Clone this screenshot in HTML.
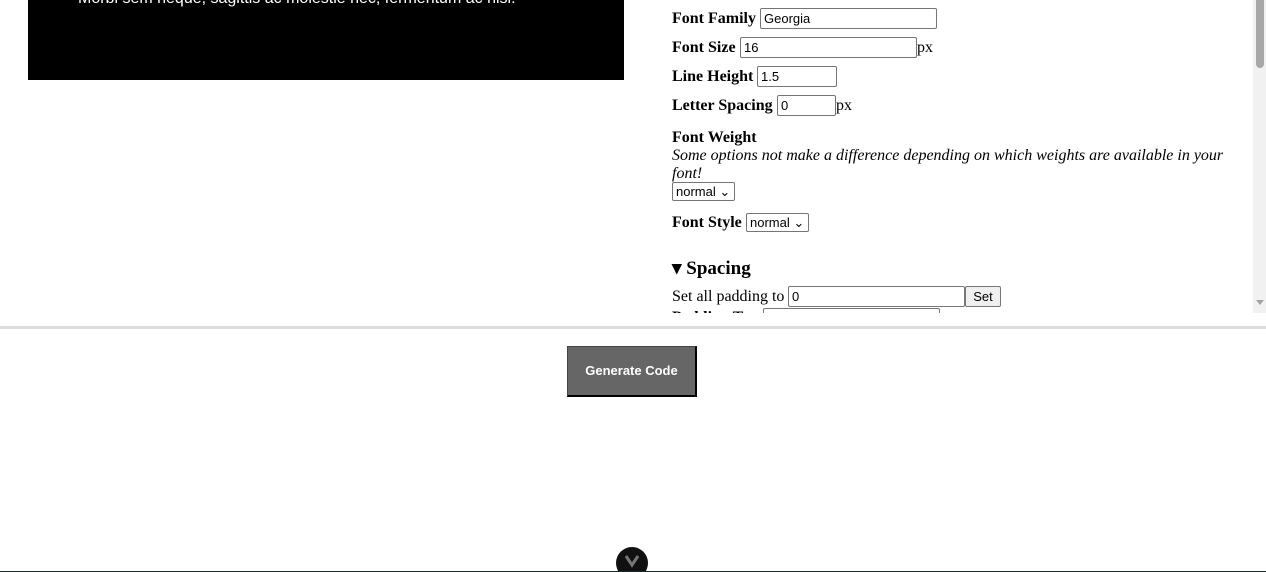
<!DOCTYPE html>
<html><head><style>
html,body{margin:0;width:1266px;height:572px;overflow:hidden}
body{background:#fff;position:relative;font-family:"Liberation Serif",serif;font-size:16px}
.a{position:absolute;white-space:nowrap}
b{font-weight:bold}
.in{position:absolute;box-sizing:border-box;border:1px solid #767676;border-radius:2px;height:21px;font:13px "Liberation Sans",sans-serif;padding:2px 3px;background:#fff;color:#000}
.sel{position:absolute;box-sizing:border-box;border:1px solid #767676;border-radius:2px;height:19px;font:13px "Liberation Sans",sans-serif;padding:1px 3px;background:#fff}
</style></head><body>
<div class="a" style="left:28px;top:0;width:596px;height:80px;background:#000;overflow:hidden">
<div class="a" style="left:50px;top:-10px;color:#fff;font:16px 'Liberation Sans',sans-serif">Morbi sem neque, sagittis ac molestie nec, fermentum ac nisi.</div></div>

<div class="a" style="left:672px;top:10px"><b>Font Family</b></div>
<div class="in" style="left:760px;top:8px;width:177px">Georgia</div>
<div class="a" style="left:672px;top:39px"><b>Font Size</b></div>
<div class="in" style="left:740px;top:37px;width:177px">16</div>
<div class="a" style="left:917px;top:39px">px</div>
<div class="a" style="left:672px;top:68px"><b>Line Height</b></div>
<div class="in" style="left:757px;top:66px;width:80px">1.5</div>
<div class="a" style="left:672px;top:97px"><b>Letter Spacing</b></div>
<div class="in" style="left:777px;top:95px;width:59px">0</div>
<div class="a" style="left:836px;top:97px">px</div>
<div class="a" style="left:672px;top:129px"><b>Font Weight</b></div>
<div class="a" style="left:672px;top:147px;font-style:italic">Some options not make a difference depending on which weights are available in your</div>
<div class="a" style="left:672px;top:165px;font-style:italic">font!</div>
<div class="sel" style="left:672px;top:182px;width:63px">normal ⌄</div>
<div class="a" style="left:672px;top:214px"><b>Font Style</b></div>
<div class="sel" style="left:746px;top:213px;width:63px">normal ⌄</div>
<div class="a" style="left:672px;top:257px;font-size:19px"><b>▾ Spacing</b></div>
<div class="a" style="left:672px;top:288px">Set all padding to</div>
<div class="in" style="left:788px;top:286px;width:177px">0</div>
<div class="in" style="left:965px;top:286px;width:36px;background:#efefef;text-align:center">Set</div>
<div class="a" style="left:660px;top:306px;width:590px;height:7px;overflow:hidden">
<div class="a" style="left:12px;top:3px"><b>Padding Top</b></div>
<div class="in" style="left:103px;top:2px;width:177px">25</div>
</div>

<div class="a" style="left:1253px;top:0;width:13px;height:313px;background:#f1f1f1"></div>
<div class="a" style="left:1256px;top:0;width:8px;height:68px;background:#a8a8a8;border-radius:0 0 4px 4px"></div>
<div class="a" style="left:1256px;top:300px;width:0;height:0;border-left:4px solid transparent;border-right:4px solid transparent;border-top:5px solid #a3a3a3"></div>

<div class="a" style="left:0;top:326px;width:1266px;height:3px;background:#ddd"></div>

<div class="a" style="left:567px;top:346px;width:130px;height:51px;box-sizing:border-box;background:#666;border:1px solid #444;border-right:2px solid #000;border-bottom:2px solid #000;color:#fff;font:bold 13px 'Liberation Sans',sans-serif;text-align:center;line-height:48px">Generate Code</div>

<div class="a" style="left:600px;top:540px;width:64px;height:31px;overflow:hidden">
<div class="a" style="left:16px;top:7px;width:32px;height:32px;border-radius:50%;background:#111"></div>
<svg class="a" style="left:24px;top:14px" width="16" height="14"><path d="M2 2 L8 11 L14 2" stroke="#777" stroke-width="3" fill="none"/></svg>
</div>
<div class="a" style="left:0;top:571px;width:1266px;height:1px;background:#1a2a2a"></div>
</body></html>
